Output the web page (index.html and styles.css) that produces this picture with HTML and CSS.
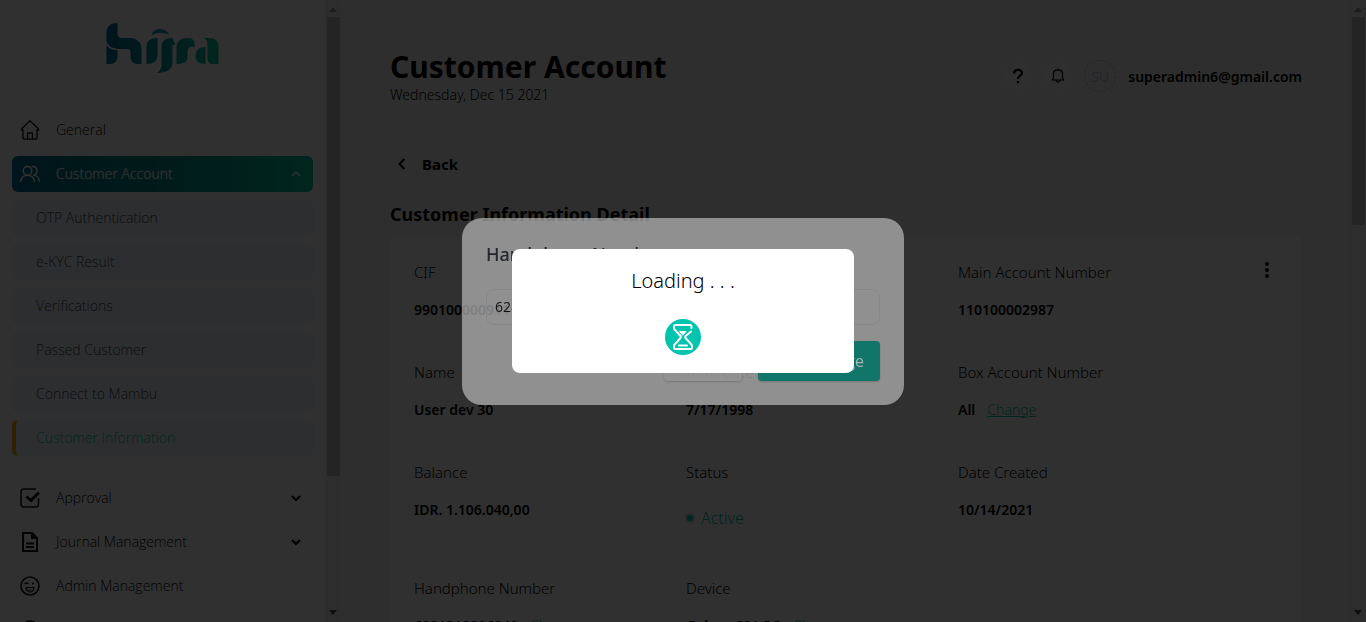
FILE: index.html
```html
<!DOCTYPE html>
<html lang="en">
<head>
<meta charset="utf-8">
<meta name="viewport" content="width=device-width, initial-scale=1">
<title>Customer Account</title>
<link rel="stylesheet" href="styles.css">
</head>
<body>
<div class="app">
  <aside class="sidebar">
    <div class="sidebar-body">
      <svg class="logo" viewBox="0 0 112 50" role="img" aria-label="hijra">
        <defs><linearGradient id="brand" gradientUnits="userSpaceOnUse" x1="0" y1="0" x2="112" y2="0"><stop offset="0" stop-color="#006e93"/><stop offset="1" stop-color="#00c4a0"/></linearGradient></defs>
        <g fill="url(#brand)">
          <path d="M0 10C0 3 4 0 11 0V11C11 14 13 15 16 15H24C31 15 35 20 35 26V41H31C27 41 24 38 24 34V29C24 27 23 26 21 26H14C5 26 0 22 0 17Z"/>
          <path d="M0 22C2 25 5 27 11 27V33C11 38 8 41 3 41H0Z"/>
          <path d="M51 15V32C51 38 47 41 40 41V24C40 18 44 15 51 15Z"/>
          <path d="M45 12C48 4 59 4 63 12C57 9 51 9 45 12Z"/>
          <path d="M55 24C55 18 59 15 66 15L69 22H66V39C66 46 61 50 50 50C54 48 55 45 55 41Z"/>
          <path d="M70 41V25C70 18 74 15 82 15C87 15 89 20 88 24C83 23 81 25 81 30V34C81 39 77 41 70 41Z"/>
          <path d="M97 15H102C109 15 112 18 112 24V41H107C103 41 101 39 101 35V22C101 18 100 16 97 15Z"/>
          <path d="M99 24V41C92 41 89 38 89 33C89 27 93 24 99 24Z"/>
        </g>
      </svg>
      <nav class="nav">
        <a class="nav-item" href="#"><svg class="icon" viewBox="0 0 20 20" fill="none" stroke="currentColor" stroke-width="1.3" stroke-linejoin="round"><path d="M3 9.500V17.500Q3 19.200 5 19.200H15Q17 19.200 17 17.500V9.500M1.200 10.200L2 8.500L10 .8L18 8.500L18.800 10.200H17M1.200 10.200H3M7.600 19V13H12.400V19"/></svg><span>General</span></a>
        <button class="nav-item active" type="button"><svg class="icon" viewBox="0 0 20 20" fill="none" stroke="currentColor" stroke-width="1.400" stroke-linecap="round"><circle cx="7.500" cy="6.800" r="4.300"/><path d="M.8 17.500C1 13.500 4 11.200 7.500 11.200S14 13.500 14.200 17.500M12 2.600C18 1.500 18.800 10 13.400 11.100C17.500 11.500 19 14 19.300 17"/></svg><span>Customer Account</span><svg class="chevron" viewBox="0 0 10 10" fill="none" stroke="currentColor" stroke-width="1.500"><path d="M1 7L5 3L9 7"/></svg></button>
        <div class="subnav">
          <a class="sub-item" href="#">OTP Authentication</a>
          <a class="sub-item" href="#">e-KYC Result</a>
          <a class="sub-item" href="#">Verifications</a>
          <a class="sub-item" href="#">Passed Customer</a>
          <a class="sub-item" href="#">Connect to Mambu</a>
          <a class="sub-item current" href="#">Customer Information</a>
        </div>
        <button class="nav-item" type="button"><svg class="icon" viewBox="0 0 20 20" fill="none" stroke="currentColor" stroke-width="1.500"><path d="M16 1H4Q1 1 1 4V16Q1 19 4 19H15.500Q18.500 19 18.500 16V10"/><path d="M6.500 8.500L11 12.500L19 4.500" stroke-width="3"/></svg><span>Approval</span><svg class="chevron" viewBox="0 0 10 10" fill="none" stroke="currentColor" stroke-width="2"><path d="M1 3L5 7L9 3"/></svg></button>
        <button class="nav-item" type="button"><svg class="icon" viewBox="0 0 20 20" fill="none" stroke="currentColor" stroke-width="2"><path d="M3 1H12L17 6V19H3ZM6 11.500H14M6 15H14"/><path d="M11 1V7H17Z" fill="currentColor" stroke="none"/></svg><span>Journal Management</span><svg class="chevron" viewBox="0 0 10 10" fill="none" stroke="currentColor" stroke-width="2"><path d="M1 3L5 7L9 3"/></svg></button>
        <a class="nav-item" href="#"><svg class="icon" viewBox="0 0 20 20" fill="none" stroke="currentColor" stroke-width="1.600"><circle cx="10" cy="10" r="9"/><path d="M4.500 8Q6.500 6 8.500 8M12 7.500H14" stroke-width="1.300"/><path d="M6 11.500H14Q13.500 16 10 16T6 11.500ZM8.500 14H11.500" stroke-width="1.200"/></svg><span>Admin Management</span></a>
        <a class="nav-item" href="#" aria-label="Settings"><svg class="icon" viewBox="0 0 20 20" fill="none" stroke="currentColor" stroke-width="1.600"><circle cx="10" cy="10" r="9"/></svg></a>
      </nav>
    </div>
    <div class="scrollbar" aria-hidden="true"><i class="arrow up"></i><i class="thumb thumb-long"></i><i class="arrow down"></i></div>
  </aside>

  <main class="main">
    <header class="header">
      <div>
        <h1>Customer Account</h1>
        <p class="date">Wednesday, Dec 15 2021</p>
      </div>
      <div class="account">
        <button class="round" type="button" aria-label="Help"><svg viewBox="0 0 16 16" fill="none" stroke="currentColor" stroke-width="2.200"><path d="M4 5.500C4 .6 12 .8 12 5C12 7.700 8 7.700 8 11M8 13V15.200"/></svg></button>
        <button class="round" type="button" aria-label="Notifications"><svg viewBox="0 0 16 16" fill="none" stroke="currentColor" stroke-width="1.200" stroke-linejoin="round"><path d="M2.200 12L3.500 10V5.500C3.500 .6 12.500 .6 12.500 5.500V10L13.800 12ZM6 12.500Q8 16 10 12.500M8 2V.3"/></svg></button>
        <span class="avatar">SU</span>
        <strong class="email">superadmin6@gmail.com</strong>
      </div>
    </header>
    <button class="back" type="button"><svg viewBox="0 0 12 12" fill="none" stroke="currentColor" stroke-width="2"><path d="M8.500 1L3.500 6L8.500 11"/></svg>Back</button>
    <h2>Customer Information Detail</h2>
    <section class="card">
      <dl class="details">
        <div><dt>CIF</dt><dd>990100000911</dd></div>
        <div></div>
        <div><dt>Main Account Number</dt><dd>110100002987</dd></div>
        <div><dt>Name</dt><dd>User dev 30</dd></div>
        <div><dt>Birth date</dt><dd>7/17/1998</dd></div>
        <div><dt>Box Account Number</dt><dd>All<a href="#">Change</a></dd></div>
        <div><dt>Balance</dt><dd>IDR. 1.106.040,00</dd></div>
        <div><dt>Status</dt><dd class="status">Active</dd></div>
        <div><dt>Date Created</dt><dd>10/14/2021</dd></div>
        <div><dt>Handphone Number</dt><dd>6281318896840<a href="#">Change</a></dd></div>
        <div><dt>Device</dt><dd>Galaxy S21 5G<a href="#">Change</a></dd></div>
      </dl>
      <button class="more" type="button" aria-label="More"><svg viewBox="0 0 4 16" fill="currentColor"><circle cx="2" cy="2" r="2"/><circle cx="2" cy="8" r="2"/><circle cx="2" cy="14" r="2"/></svg></button>
    </section>
  </main>
  <div class="scrollbar" aria-hidden="true"><i class="arrow up"></i><i class="thumb"></i><i class="arrow down"></i></div>
</div>

<div class="overlay">
  <form class="modal">
    <label for="phone">Handphone Number</label>
    <input id="phone" type="text" value="6281318896840">
    <div class="actions">
      <button class="cancel" type="button">Cancel</button>
      <button class="submit" type="button">Yes, Change</button>
    </div>
  </form>
</div>
<div class="overlay clear">
  <div class="loading" role="alertdialog" aria-label="Loading">
    <p>Loading . . .</p>
    <svg viewBox="0 0 36 36" fill="none" stroke="#fff" stroke-width="2" stroke-linecap="round" stroke-linejoin="round"><circle cx="18" cy="18" r="18" fill="#00c4ae" stroke="none"/><path d="M26.500 9V7.500Q26.500 6 25 6H10.500Q9 6 9 7.500V9Q9 10 10 11L15.500 17Q16.300 18 15.500 19L10 25Q9 26 9 27V28.500Q9 30 10.500 30H25.500Q27 30 27 28.500V27Q27 26 26 25L20.500 19Q19.700 18 20.500 17L26 12.500M14 26.500H22"/><path d="M15 12.500H21L18 16Z" fill="#fff" stroke-width="1"/></svg>
  </div>
</div>
</body>
</html>
```
FILE: styles.css
```css
* { box-sizing: border-box; }
body { margin: 0; overflow: hidden; font-family: "Open Sans", "Noto Sans", sans-serif; font-size: 14px; color: #000; }
h1, h2, p, dl, dd { margin: 0; }
button { padding: 0; border: 0; background: none; color: inherit; font: inherit; text-align: left; cursor: pointer; }
a { color: inherit; text-decoration: none; }

.app { display: flex; height: 100vh; background: #f3f3f3; }

.sidebar { display: flex; flex: 0 0 341px; background: #fff; }
.sidebar-body { flex: 1; padding: 23px 12px 0; overflow: hidden; font-weight: 300; }
.logo { display: block; width: 113px; height: 50px; margin: 0 auto 39px; }
.nav { display: flex; flex-direction: column; gap: 8px; }
.nav-item { display: flex; flex: 0 0 36px; align-items: center; gap: 16px; padding: 0 12px 0 8px; border-radius: 6px; line-height: 18px; }
.nav-item span { flex: 1; }
.icon { width: 20px; height: 20px; }
.nav-item .icon { color: #111; }
.nav-item.active { color: #fff; text-shadow: 0 0 1px #fff; background: linear-gradient(90deg, #006e93, #008a86 45%, #00c4a0); }
.nav-item.active .icon { color: #fff; }
.chevron { width: 10px; height: 10px; }
.subnav { display: grid; gap: 8px; margin-bottom: 16px; }
.sub-item { height: 36px; padding-left: 24px; border-radius: 6px; background: #eef3f7; color: #3c4650; line-height: 36px; }
.sub-item.current { padding-left: 20px; border-left: 4px solid #ffa800; color: #00c4a0; }

.scrollbar { display: flex; flex: 0 0 16px; flex-direction: column; justify-content: space-between; align-items: center; padding: 7px 0; background: #ececec; }
.thumb { width: 13px; height: 208px; margin: 5px 0 auto; background: #bdbdbd; }
.thumb-long { height: 459px; }
.arrow { border: 4px solid transparent; }
.arrow.up { border-top: 0; border-bottom-color: #999; border-bottom-width: 5px; }
.arrow.down { border-bottom: 0; border-top-color: #444; border-top-width: 5px; }

.main { flex: 1; min-width: 0; padding: 47px 48px 0 49px; overflow: hidden; font-family: "Noto Sans", sans-serif; }
.header { display: flex; justify-content: space-between; }
h1 { font-size: 30px; line-height: 40px; }
.date { font-weight: 300; line-height: 16px; }
.account { display: flex; align-items: center; gap: 12px; height: 58px; }
.email { font-weight: 600; }
.round { display: grid; place-items: center; width: 28px; height: 28px; border-radius: 50%; background: #fafafa; }
.round svg { width: 16px; height: 16px; }
.avatar { display: grid; place-items: center; width: 32px; height: 32px; border: 1px dashed #bcc5e0; border-radius: 50%; color: #bcc5e0; }
.back { display: flex; align-items: center; gap: 14px; margin-top: 47px; padding-left: 6px; font-size: 15px; font-weight: 700; line-height: 24px; }
.back svg { width: 12px; height: 12px; }
h2 { margin-top: 25px; font-size: 18px; line-height: 26px; }

.card { display: flex; margin-top: 9px; padding: 26px 24px; border-radius: 8px; background: #fff; }
.details { display: grid; flex: 1; grid-template-columns: repeat(3, 1fr); }
.details > div { min-height: 100px; }
dt { margin-bottom: 18px; font-size: 15px; font-weight: 300; line-height: 20px; }
dd { display: flex; gap: 12px; font-weight: 600; line-height: 20px; }
dd a { color: #00c4a0; font-weight: 300; text-decoration: underline; }
.status { align-items: center; gap: 8px; height: 36px; margin-bottom: 42px; color: #00c4a0; font-size: 16px; font-weight: 300; }
.status::before { width: 6px; height: 6px; border: 0; border-radius: 50%; background: #00c4a0; box-shadow: 0 0 0 2px #b8e8dd; content: ""; margin-left: 1px; }
.more { width: 48px; height: 16px; padding-left: 32px; }
.more svg { display: block; width: 10px; height: 16px; }

.overlay { position: fixed; inset: 0; display: grid; place-items: center; background: rgba(0, 0, 0, 0.81); }
.overlay.clear { background: none; }
.modal { display: grid; width: 442px; padding: 24px; border-radius: 20px; background: rgba(195, 195, 195, 0.65); }
.modal label { color: #22252c; font: 500 18px/24px "Noto Sans", sans-serif; }
.modal input { height: 36px; margin: 23px 0 16px; padding: 0 8px; border: 1px solid #878787; border-radius: 8px; background: transparent; color: #111; font: 14px "Open Sans", sans-serif; }
.actions { display: flex; justify-content: flex-end; gap: 16px; font-size: 16px; }
.actions button { height: 40px; border-radius: 4px; text-align: center; box-shadow: 0 1px 2px #777; }
.cancel { width: 78px; background: rgba(146, 146, 146, 0.6); }
.submit { padding: 0 16px; background: #12756a; color: #a5b5b2; }
.loading { display: grid; justify-items: center; gap: 24px; width: 342px; padding: 18px; border-radius: 8px; background: #fff; color: #000; font: 300 20px/28px "Noto Sans", sans-serif; }
.loading svg { width: 36px; height: 36px; }
```
